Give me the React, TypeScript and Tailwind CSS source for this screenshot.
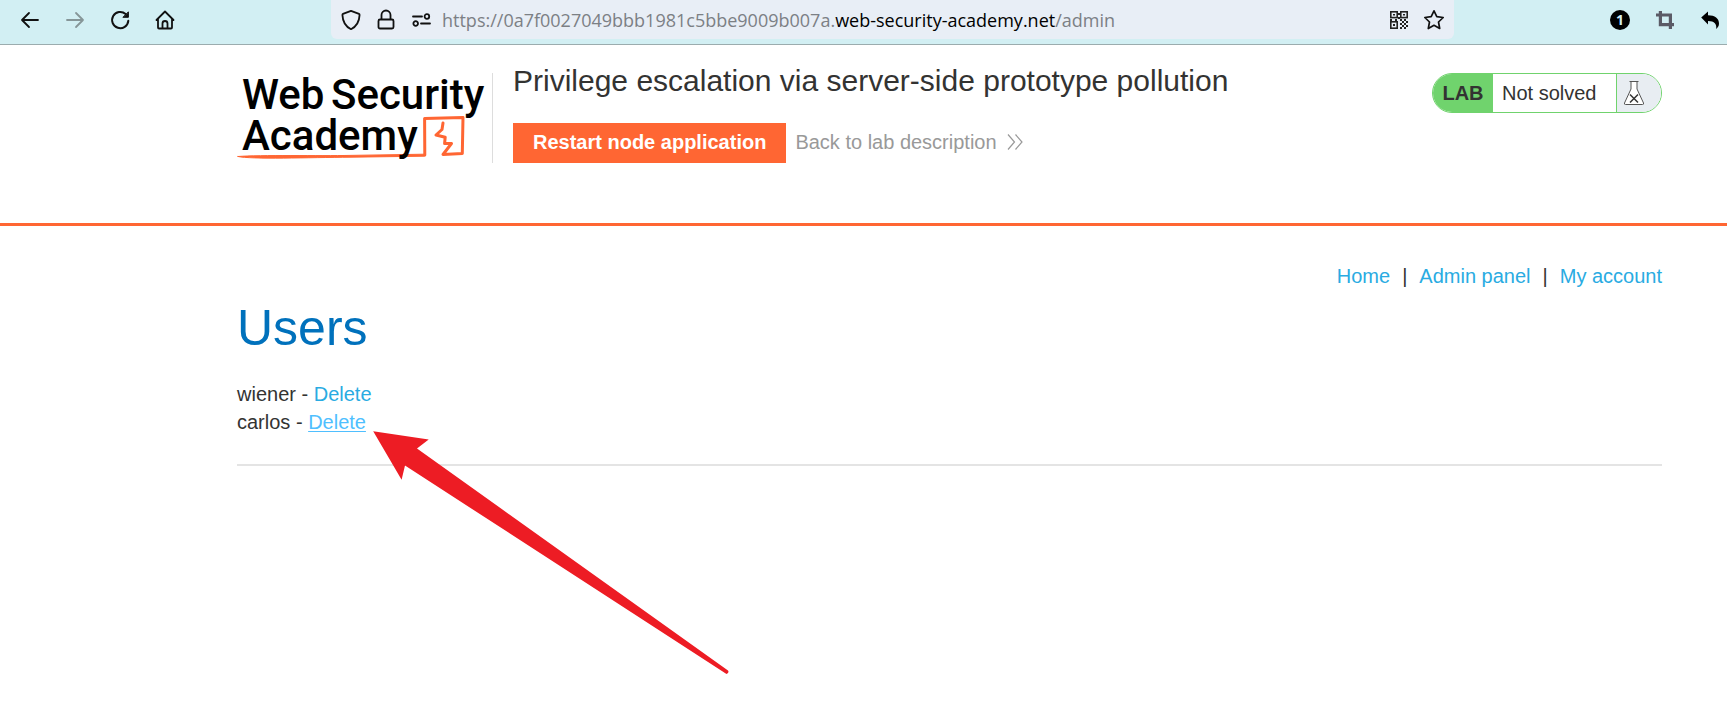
import React from "react";

function IconButton({ label, children }: { label: string; children: React.ReactNode }) {
  return (
    <button type="button" aria-label={label} className="flex size-6 shrink-0 items-center justify-center">
      {children}
    </button>
  );
}

function Stroke({ d, color = "#111", width = 1.8 }: { d: string; color?: string; width?: number }) {
  return (
    <svg viewBox="0 0 24 24" className="size-6" fill="none" stroke={color} strokeWidth={width} strokeLinecap="round" strokeLinejoin="round" aria-hidden="true">
      <path d={d} />
    </svg>
  );
}

function QrIcon() {
  const cells = [
    [11, 5], [11, 9], [3, 11], [8, 11], [13, 11], [17, 11],
    [15, 13], [19, 13], [13, 15], [17, 15], [15, 17], [19, 17], [13, 19], [17, 19],
  ];
  return (
    <svg viewBox="0 0 24 24" className="size-6" aria-hidden="true">
      <g fill="none" stroke="#222" strokeWidth="1.600">
        <rect x="3.800" y="3.800" width="6.400" height="5.800" />
        <rect x="13.800" y="3.800" width="6.400" height="5.800" />
        <rect x="3.800" y="13.800" width="6.400" height="6.400" />
      </g>
      <g fill="#222">
        <rect x="6" y="6" width="2" height="1.500" />
        <rect x="16" y="6" width="2" height="1.500" />
        <rect x="6" y="16" width="2" height="2" />
        {cells.map(([x, y]) => (
          <rect key={`${x}-${y}`} x={x} y={y} width="2" height="2" />
        ))}
      </g>
    </svg>
  );
}

function BrowserBar() {
  return (
    <header className="flex h-[45px] items-start border-b border-[#9bacae] bg-[#d2eff3] font-['Open_Sans','Noto_Sans',sans-serif]">
      <div className="flex h-[39px] w-[331px] shrink-0 items-center gap-[21px] pl-[18px]">
        <IconButton label="Back"><Stroke d="M20 12H4M11 5L4 12l7 7" /></IconButton>
        <IconButton label="Forward"><Stroke d="M4 12h16M13 5l7 7-7 7" color="#869698" /></IconButton>
        <IconButton label="Reload">
          <svg viewBox="0 0 24 24" className="size-6" fill="none" stroke="#111" strokeWidth="2" strokeLinecap="round" aria-hidden="true">
            <path d="M20.3 12.8A8.1 8.1 0 1 1 17.6 6" />
            <path d="M20.4 4.2V9.3H15.3z" fill="#111" strokeWidth="1" strokeLinejoin="round" />
          </svg>
        </IconButton>
        <IconButton label="Home"><Stroke d="M3.5 12L12 3.5 20.500 12M5 10.800V19.500a1 1 0 0 0 1 1h12a1 1 0 0 0 1-1V10.800M9.500 20.500V15.500a2.500 2.500 0 0 1 5 0V20.500" /></IconButton>
      </div>
      <div className="flex h-[39px] min-w-0 flex-1 items-center rounded-b-md bg-[#e8eef6] px-2">
        <div className="flex shrink-0 items-center gap-[11px]">
          <IconButton label="Tracking protection"><Stroke d="M12 2.800l8 3.100c.5.2.6.5.6 1C20.300 13.500 17 18.800 12 21.200 7 18.800 3.700 13.500 3.400 6.900c0-.5.1-.8.6-1z" /></IconButton>
          <IconButton label="Connection security"><Stroke d="M6 11.500h12a1.500 1.500 0 0 1 1.500 1.500v6a1.500 1.500 0 0 1-1.500 1.500H6A1.500 1.500 0 0 1 4.500 19v-6A1.500 1.500 0 0 1 6 11.500zM7.500 11.500V7a4.500 4.500 0 0 1 9 0v4.500" /></IconButton>
          <IconButton label="Permissions"><Stroke d="M4 8.500h9M12 15.500h9M15.600 8.500a2.300 2.300 0 1 0 4.600 0a2.300 2.300 0 1 0-4.600 0M4.400 15.500a2.300 2.300 0 1 0 4.600 0a2.300 2.300 0 1 0-4.600 0" /></IconButton>
        </div>
        <div className="min-w-0 flex-1 truncate pl-[9px] text-lg leading-6 text-[#7c8085]">
          https://0a7f0027049bbb1981c5bbe9009b007a.<span className="text-black">web-security-academy.net</span>/admin
        </div>
        <div className="flex shrink-0 items-center gap-[11px]">
          <IconButton label="QR code"><QrIcon /></IconButton>
          <IconButton label="Bookmark"><Stroke d="M12 2.800l2.800 5.900 6.400.8-4.700 4.500 1.200 6.500-5.700-3.200-5.700 3.200 1.200-6.500-4.700-4.500 6.400-.8z" width={1.7} /></IconButton>
        </div>
      </div>
      <div className="flex h-[39px] w-[273px] shrink-0 items-center justify-end gap-[21px] pr-[5px]">
        <IconButton label="Notifications">
          <span className="flex size-5 items-center justify-center rounded-full bg-black text-sm font-bold text-[#d2eff3]">1</span>
        </IconButton>
        <IconButton label="Crop">
          <svg viewBox="0 0 24 24" className="size-6" fill="none" stroke="#5b5b66" strokeWidth="3.200" aria-hidden="true">
            <path d="M3 7h14.400v10M7.400 3v13.600h13.600M17.400 15v6" />
          </svg>
        </IconButton>
        <IconButton label="Undo">
          <svg viewBox="0 0 24 24" className="size-6" aria-hidden="true">
            <path d="M3.200 9.500L10 3.500v3.800c7 0 11 3.200 11 8.200 0 2.300-1 4.100-2.900 5.500 1-4.700-1.600-8-8.100-8v3.500z" />
          </svg>
        </IconButton>
      </div>
    </header>
  );
}

function AcademyLogo() {
  return (
    <svg viewBox="237 73 255 90" className="h-[90px] w-[255px] shrink-0" role="img" aria-label="Web Security Academy">
      <g fill="none" stroke="#ff6633" strokeLinejoin="round" strokeLinecap="round">
        <path d="M238 156.500C260 154.800 320 156 350 155.400L424.500 154.200V156.200L350 157.200C310 157.500 250 159.500 238 156.500z" fill="#ff6633" strokeWidth="1" />
        <path d="M424.800 155L424.600 118.500 463 117.500 462.300 153.500 443 154.500 451.500 143.500H444.600L445.200 137.200 436 135 442 129.500 443 123" strokeWidth="3" />
      </g>
      <g className="font-['Roboto',sans-serif] text-[42px] font-medium" fill="#000">
        <text x="242" y="109">Web</text>
        <text x="331" y="109">Security</text>
        <text x="242" y="150">Academy</text>
      </g>
    </svg>
  );
}

function LabStatus() {
  return (
    <div className="flex h-10 w-[230px] shrink-0 overflow-hidden rounded-full border border-[#70d36d] bg-white text-xl leading-[38px]">
      <span className="w-[60px] bg-[#70d36d] text-center font-bold">LAB</span>
      <span className="flex-1 pl-[9px]">Not solved</span>
      <span className="flex w-[45px] items-center border-l border-[#70d36d] bg-[#e8edf2] pl-1.5">
        <svg viewBox="0 0 22 26" className="h-[26px] w-[22px]" fill="#fff" stroke="#555" strokeWidth="1" aria-hidden="true">
          <path d="M6.500 1.500h9M8 1.500V9L1.500 23q-.5 1.500 1 1.500H19.500q1.500 0 1-1.500L14 9V1.500" />
          <path d="M7 14.500l8 8M15 14.500l-8 8" stroke="#333" strokeWidth="1.500" />
        </svg>
      </span>
    </div>
  );
}

function LabHeader() {
  return (
    <section className="flex items-start border-b-[3px] border-[#ff6633] pt-[18px] pr-[65px] pb-[60px] pl-[237px]">
      <div className="mt-[10px] flex border-r border-[#dddddd]">
        <AcademyLogo />
      </div>
      <div className="flex-1 pl-5">
        <h2 className="text-[30px] leading-9">Privilege escalation via server-side prototype pollution</h2>
        <div className="mt-6 flex items-center gap-[9px]">
          <button type="button" className="h-10 bg-[#ff6633] px-5 pb-0.5 text-xl font-bold text-white">Restart node application</button>
          <a href="#description" className="flex items-center gap-[10px] pb-0.5 text-xl text-[#999999]">
            Back to lab description
            <svg viewBox="0 0 16 16" className="size-4" fill="none" stroke="#999" strokeWidth="1.200" aria-hidden="true">
              <path d="M1 .5L7.500 8 1 15.500M8.500.5L15 8 8.500 15.500" />
            </svg>
          </a>
        </div>
      </div>
      <div className="mt-[10px]">
        <LabStatus />
      </div>
    </section>
  );
}

export default function App() {
  return (
    <div className="min-h-screen bg-white font-['Liberation_Sans',Arial,sans-serif] text-[#333332]">
      <BrowserBar />
      <LabHeader />
      <main className="relative pt-9 pr-[65px] pl-[237px] text-xl leading-7">
        <nav className="flex justify-end gap-3 text-[#29abe2]">
          <a href="#home">Home</a>
          <span className="text-[#333332]">|</span>
          <a href="#admin">Admin panel</a>
          <span className="text-[#333332]">|</span>
          <a href="#account">My account</a>
        </nav>
        <h1 className="mt-2 text-[50px] leading-[60px] text-[#0071bc]">Users</h1>
        <ul className="mt-[22px]">
          <li>wiener - <a href="#delete-wiener" className="text-[#29abe2]">Delete</a></li>
          <li>carlos - <a href="#delete-carlos" className="text-[#4fbfff] underline decoration-1 underline-offset-2">Delete</a></li>
        </ul>
        <hr className="mt-7 border-t-2 border-[#e4e4e4]" />
        <svg viewBox="373 431 356 244" className="pointer-events-none absolute top-[205px] left-[373px] h-[244px] w-[356px]" aria-hidden="true">
          <path d="M373.200 431.200L428.700 439.500 417 448.500 728 670.500Q729.500 672.500 726.500 674L405 465.500 401.600 479.700z" fill="#ed1c24" />
        </svg>
      </main>
    </div>
  );
}
